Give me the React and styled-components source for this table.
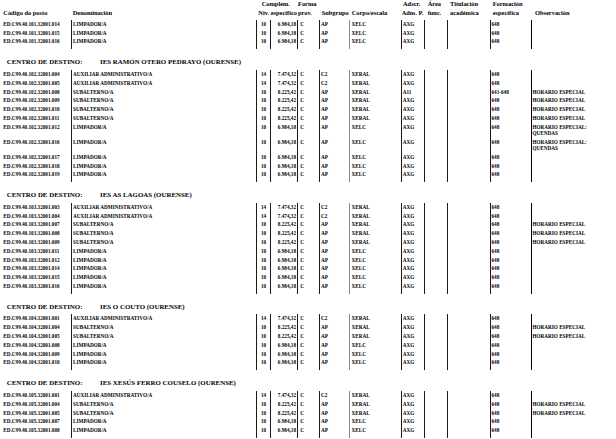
import styled, { createGlobalStyle } from 'styled-components';

const GlobalStyle = createGlobalStyle`
  html, body {
    margin: 0;
    padding: 0;
    background: #fff;
  }
  body {
    font-family: "Liberation Serif", "Times New Roman", serif;
    color: #000;
    overflow: hidden;
  }
`;

const COLS = '71px 185px 14px 27px 22px 30px 52px 23px 23px 43px 41px 1fr';

const LINES = {
  none: 'none',
  dark: '1px solid #1a1a1a',
  grey: '1px solid #8a8a8a',
  thick: '1.5px solid #000',
};

const Page = styled.div`
  width: 616px;
  height: 439px;
  overflow: hidden;
`;

const HeaderRow = styled.div`
  display: grid;
  grid-template-columns: ${COLS};
  height: 19.6px;
  box-sizing: border-box;
  padding-bottom: 2.2px;
`;

const HeadCell = styled.div`
  display: flex;
  flex-direction: column;
  justify-content: flex-end;
  padding-left: ${p => p.$pl || 0}px;
  font-size: 6.4px;
  font-weight: bold;
  line-height: 8.7px;
  white-space: nowrap;
`;

const HeadLine = styled.span`
  display: block;
  height: 8.7px;
  margin-left: ${p => p.$indent || 0}px;
`;

const Section = styled.section`
  margin-top: 9.4px;
`;

const Heading = styled.h2`
  display: flex;
  margin: 0 0 3.3px;
  padding-left: 6.7px;
  height: 8px;
  font-size: 6.9px;
  line-height: 8px;
  font-weight: bold;
  white-space: nowrap;
`;

const HeadingLabel = styled.span`
  width: 93.3px;
  flex-shrink: 0;
`;

const Block = styled.div``;

const Row = styled.div`
  display: grid;
  grid-template-columns: ${COLS};
  &:last-child > div {
    padding-bottom: 4.3px;
  }
`;

const Cell = styled.div`
  box-sizing: border-box;
  padding: 1.3px ${p => p.$pr || 0}px 1.3px ${p => p.$pl || 0}px;
  border-left: ${p => LINES[p.$line || 'none']};
  text-align: ${p => p.$align || 'left'};
  font-size: 5.2px;
  line-height: 6.2px;
  font-weight: bold;
  white-space: nowrap;
`;

const cols = [
  { key: 'code', pl: 3.3 },
  { key: 'name', pl: 1, line: 'dark' },
  { key: 'niv', align: 'center', line: 'dark' },
  { key: 'amount', align: 'right', pr: 1, line: 'dark' },
  { key: 'forma', pl: 2.3, line: 'dark' },
  { key: 'sub', pl: 1, line: 'dark' },
  { key: 'corpo', pl: 1.5, line: 'grey' },
  { key: 'adscr', pl: 0.7, line: 'dark' },
  { key: 'area', line: 'dark' },
  { key: 'titul', line: 'dark' },
  { key: 'form', pl: 0.5, line: 'dark' },
  { key: 'obs', pl: 0.5, line: 'thick' },
];

const headers = [
  { pl: 3.3, lines: [['', 0], ['Código do posto', 0]] },
  { pl: 1.7, lines: [['', 0], ['Denominación', 0]] },
  { pl: 2.3, lines: [['Complem.', 3.4], ['Nív.', 0]] },
  { pl: 0.7, lines: [['', 0], ['específico', 0]] },
  { pl: 1, lines: [['Forma', 0], ['prov.', 0]] },
  { pl: 2.7, lines: [['', 0], ['Subgrupo', 0]] },
  { pl: 2.7, lines: [['', 0], ['Corpo/escala', 0]] },
  { pl: 0.7, lines: [['Adscr.', 1.3], ['Adm. P.', 0]] },
  { pl: 3.7, lines: [['Área', 0], ['func.', 0]] },
  { pl: 3, lines: [['Titulación', 0], ['académica', 0]] },
  { pl: 2.7, lines: [['Formación', 0], ['específica', 0]] },
  { pl: 4, lines: [['', 0], ['Observación', 0]] },
];

const LIMP = { name: 'LIMPADOR/A', niv: '10', amount: '6.984,18', forma: 'C', sub: 'AP', corpo: 'XELC', adscr: 'AXG', form: '648' };
const AUX = { name: 'AUXILIAR ADMINISTRATIVO/A', niv: '14', amount: '7.474,32', forma: 'C', sub: 'C2', corpo: 'XERAL', adscr: 'AXG', form: '648' };
const SUB = { name: 'SUBALTERNO/A', niv: '10', amount: '8.225,42', forma: 'C', sub: 'AP', corpo: 'XERAL', adscr: 'AXG', form: '648' };
const HE = ['HORARIO ESPECIAL'];
const HEQ = ['HORARIO ESPECIAL:', 'QUENDAS'];

const sections = [
  {
    prefix: 'ED.C99.40.101.32001.',
    rows: [['014', LIMP], ['015', LIMP], ['016', LIMP]],
  },
  {
    title: 'IES RAMÓN OTERO PEDRAYO (OURENSE)',
    prefix: 'ED.C99.40.102.32001.',
    rows: [
      ['004', AUX],
      ['005', AUX],
      ['008', { ...SUB, adscr: 'A11', form: '641-648', obs: HE }],
      ['009', { ...SUB, obs: HE }],
      ['010', { ...SUB, obs: HE }],
      ['011', { ...SUB, obs: HE }],
      ['012', { ...LIMP, obs: HEQ }],
      ['016', { ...LIMP, obs: HEQ }],
      ['017', LIMP],
      ['018', LIMP],
      ['019', LIMP],
    ],
  },
  {
    title: 'IES AS LAGOAS (OURENSE)',
    prefix: 'ED.C99.40.103.32001.',
    rows: [
      ['003', AUX],
      ['004', AUX],
      ['007', { ...SUB, obs: HE }],
      ['008', { ...SUB, obs: HE }],
      ['009', { ...SUB, obs: HE }],
      ['011', LIMP],
      ['012', LIMP],
      ['014', LIMP],
      ['015', LIMP],
      ['016', LIMP],
    ],
  },
  {
    title: 'IES O COUTO (OURENSE)',
    prefix: 'ED.C99.40.104.32001.',
    rows: [
      ['001', AUX],
      ['004', { ...SUB, obs: HE }],
      ['005', { ...SUB, obs: HE }],
      ['008', LIMP],
      ['009', LIMP],
      ['010', LIMP],
    ],
  },
  {
    title: 'IES XESÚS FERRO COUSELO (OURENSE)',
    prefix: 'ED.C99.40.105.32001.',
    rows: [
      ['001', AUX],
      ['004', { ...SUB, obs: HE }],
      ['005', { ...SUB, obs: HE }],
      ['007', LIMP],
      ['008', LIMP],
    ],
  },
];

function PostRow({ code, data }) {
  const values = { ...data, code };
  return (
    <Row>
      {cols.map(c => (
        <Cell key={c.key} $pl={c.pl} $pr={c.pr} $align={c.align} $line={c.line}>
          {c.key === 'obs'
            ? (values.obs || []).map((l, i) => <div key={i}>{l}</div>)
            : values[c.key] || ''}
        </Cell>
      ))}
    </Row>
  );
}

function PostBlock({ prefix, rows }) {
  return (
    <Block>
      {rows.map(([n, data]) => (
        <PostRow key={n} code={prefix + n} data={data} />
      ))}
    </Block>
  );
}

function App() {
  return (
    <Page>
      <GlobalStyle />
      <HeaderRow>
        {headers.map((h, i) => (
          <HeadCell key={i} $pl={h.pl}>
            {h.lines.map(([t, indent], j) => (
              <HeadLine key={j} $indent={indent}>{t}</HeadLine>
            ))}
          </HeadCell>
        ))}
      </HeaderRow>
      {sections.map((s, i) =>
        s.title ? (
          <Section key={i}>
            <Heading>
              <HeadingLabel>CENTRO DE DESTINO:</HeadingLabel>
              <span>{s.title}</span>
            </Heading>
            <PostBlock prefix={s.prefix} rows={s.rows} />
          </Section>
        ) : (
          <PostBlock key={i} prefix={s.prefix} rows={s.rows} />
        )
      )}
    </Page>
  );
}

export default App;
